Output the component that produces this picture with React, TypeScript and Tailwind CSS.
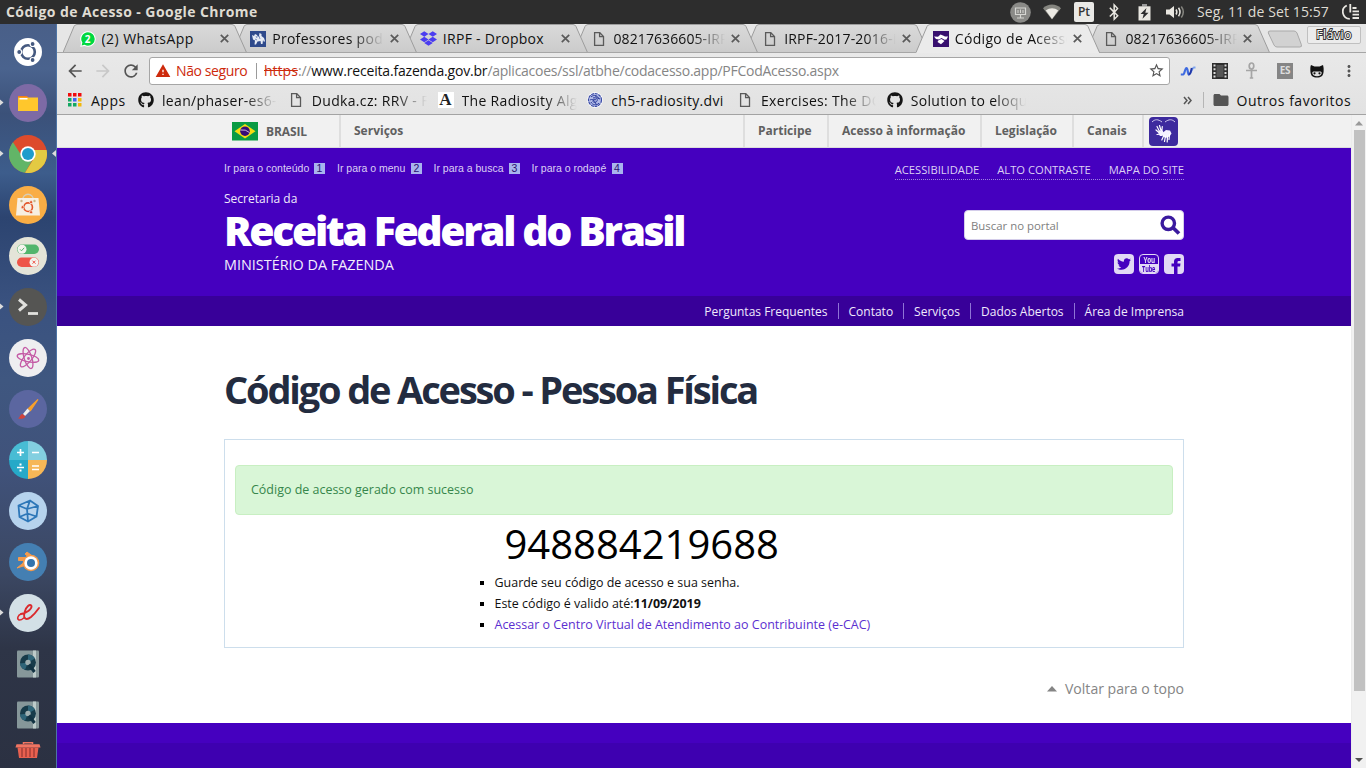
import React from "react";
import { FaGithub, FaDropbox, FaTwitter, FaFacebookF, FaBluetoothB } from "react-icons/fa";
import { MdArrowBack, MdArrowForward, MdRefresh, MdWarning, MdStarBorder, MdMoreVert, MdFolder } from "react-icons/md";

const FileIcon = () => (
  <svg width="16" height="16" viewBox="0 0 16 16" fill="none" stroke="#5a5a5a" strokeWidth="1.3">
    <path d="M3.6 1.7h5.2l3.7 3.8v8.8H3.6z" />
    <path d="M8.6 1.9v3.8h3.7" />
  </svg>
);

const WhatsIcon = () => (
  <span className="relative flex size-4 items-center justify-center">
    <svg className="absolute inset-0" width="16" height="16" viewBox="0 0 16 16">
      <path d="M8 .2a7.700 7.700 0 0 1 0 15.500 8 8 0 0 1-3.500-.8L.3 15.800l1-4A7.700 7.700 0 0 1 8 .2z" fill="#fff" />
      <path d="M8 1.2a6.7 6.7 0 0 1 0 13.5 7 7 0 0 1-3.4-.9l-3 .8.8-3A6.7 6.7 0 0 1 8 1.2z" fill="#00d83f" />
    </svg>
    <span className="relative text-[10px] leading-none font-bold text-white">2</span>
  </span>
);

const UniversityIcon = () => (
  <svg width="16" height="16" viewBox="0 0 16 16">
    <rect width="16" height="16" fill="#2f4a8c" />
    <path d="M2 4l2 1 1-2 2 1 1 2 1-1 .5-3 2 1v2l2.500 2 1 3-1 1-1-2-.5 4H11l-.5-3-3 .5L6 13.500H4.500l.5-4L3 8.500z" fill="#e6ebf5" />
    <path d="M5 8l2 1M9 5l1 3M6 5l1 2" stroke="#5f76b0" strokeWidth=".8" />
  </svg>
);

const ReceitaIcon = () => (
  <svg width="16" height="16" viewBox="0 0 16 16">
    <rect width="16" height="16" fill="#38106f" />
    <path d="M1 5.500l4 .3L7.500 3.500l2.500 1L12 5.500l3 0-1.500 3-2 .3L8.500 7 6 8.500 3 8z" fill="#fff" />
    <path d="M5.500 9.300L8.500 8l3 2-3.500 3.300L4.500 11z" fill="#fff" />
  </svg>
);

type Tab = { label: string; icon: React.ReactNode; active?: boolean; fade?: boolean };
const tabs: Tab[] = [
  { label: "(2) WhatsApp", icon: <WhatsIcon /> },
  { label: "Professores pode", icon: <UniversityIcon />, fade: true },
  { label: "IRPF - Dropbox", icon: <FaDropbox size={17} color="#4b3cf0" /> },
  { label: "08217636605-IRPF", icon: <FileIcon />, fade: true },
  { label: "IRPF-2017-2016-im", icon: <FileIcon />, fade: true },
  { label: "Código de Acesso", icon: <ReceitaIcon />, active: true, fade: true },
  { label: "08217636605-IRPF", icon: <FileIcon />, fade: true },
];
const layers = ["z-[7]", "z-[6]", "z-[5]", "z-[4]", "z-[3]", "z-[8]", "z-[1]"];
const spacing = [
  "tracking-[0.45px]",
  "tracking-[0.3px]",
  "tracking-[0.28px]",
  "tracking-[0.1px]",
  "tracking-[0.2px]",
  "tracking-[0.33px]",
  "tracking-[0.1px]",
];

function ChromeTab({ tab, layer, track }: { tab: Tab; layer: string; track: string }) {
  return (
    <div className={`relative -mr-[12.850px] h-[29px] w-[183.500px] shrink-0 ${layer}`}>
      <svg className="absolute inset-0" width="184" height="29" viewBox="0 0 184 29">
        <defs>
          <linearGradient id="tabFill" x1="0" y1="0" x2="0" y2="1">
            <stop offset="0" stopColor="#dadada" />
            <stop offset="1" stopColor="#cbcbcb" />
          </linearGradient>
        </defs>
        <path
          d="M0 28.500L11 2.500Q12 .5 14 .5H169Q171 .5 172 2.500L183.500 28.500"
          fill={tab.active ? "#ebebeb" : "url(#tabFill)"}
          stroke="#9c9c9c"
        />
        {tab.active ? <path d="M.5 28.500H183" stroke="#ebebeb" /> : <path d="M0 28.500H184" stroke="#a6a6a6" />}
      </svg>
      <div className="relative flex h-[29px] items-center pl-4">
        <span className="flex w-[18px] justify-center">{tab.icon}</span>
        <span
          className={`ml-[5px] w-[112px] overflow-hidden text-[14px] leading-5 whitespace-nowrap text-[#111] ${track} ${
            tab.fade ? "[mask-image:linear-gradient(to_right,black_72%,transparent_100%)]" : ""
          }`}
        >
          {tab.label}
        </span>
        <svg className="ml-[6px]" width="9" height="9" viewBox="0 0 9 9" stroke="#5a5a5a" strokeWidth="1.700">
          <path d="M.8.8l7.400 7.400M8.200.8L.8 8.200" />
        </svg>
      </div>
    </div>
  );
}

const AppsIcon = () => (
  <svg width="14" height="14" viewBox="0 0 14 14">
    <path d="M0 0h3.500v3.500H0zM5 0h3.500v3.500H5zM10 0h3.500v3.500H10z" fill="#f00c0c" />
    <path d="M0 5h3.500v3.500H0zM0 10h3.500v3.500H0zM5 10h3.500v3.500H5z" fill="#12a862" />
    <path d="M5 5h3.500v3.500H5z" fill="#3f63f0" />
    <path d="M10 5h3.500v3.500H10zM10 10h3.500v3.500H10z" fill="#f2b70a" />
  </svg>
);

const LetterIcon = () => (
  <span className="flex size-4 items-center justify-center bg-white font-['Liberation_Serif',serif] text-[17px] leading-4 font-bold text-[#222]">A</span>
);

const KnotIcon = () => (
  <svg width="16" height="16" viewBox="0 0 16 16" fill="none">
    <circle cx="8" cy="8" r="7.800" fill="#fff" />
    <circle cx="8" cy="8" r="6.500" stroke="#3b4ba5" strokeWidth="1.200" strokeDasharray="3 .7" fill="#b3bce8" />
    <path d="M4 5c3-3 7-1 8 2M4 10c1 3 6 4 8 1M6 6c3-1 5 1 4 3s-4 2-4 0 2-2 3-1M3 8c2-1 4-1 6 4M9 3c-1 2 1 3 4 4" stroke="#2a3a9a" />
  </svg>
);

const bookmarks = [
  { label: "lean/phaser-es6-w", icon: <FaGithub size={16} color="#151515" />, fade: true },
  { label: "Dudka.cz: RRV - Fo", icon: <FileIcon />, fade: true },
  { label: "The Radiosity Algo", icon: <LetterIcon />, fade: true },
  { label: "ch5-radiosity.dvi", icon: <KnotIcon />, fade: false },
  { label: "Exercises: The DOM", icon: <FileIcon />, fade: true },
  { label: "Solution to eloque", icon: <FaGithub size={16} color="#151515" />, fade: true },
];

function SystemBar() {
  return (
    <div className="flex h-6 shrink-0 items-center bg-[#2d2d2d] pr-[6px] pl-[6px] text-[#dfdbd2]">
      <span className="flex-1 text-[14px] leading-6 font-bold tracking-[0.43px]">Código de Acesso - Google Chrome</span>
      <svg width="21" height="21" viewBox="0 0 21 21">
        <circle cx="10.500" cy="10.500" r="10.300" fill="#8a8a87" />
        <path d="M5.500 6h10v6.500h-10zM10.500 12.500v3M7 16h7" fill="none" stroke="#d6d6d2" strokeWidth="1.200" />
        <path d="M8 8v3M10.500 7.500v3.500M13 8v3" stroke="#d6d6d2" />
      </svg>
      <svg className="ml-[12px]" width="18" height="16" viewBox="0 0 18 16">
        <path d="M0 4.200C5-.6 13-.6 18 4.200L9 15.500z" fill="#85857f" />
        <path d="M2.800 6.600c4-3 8.500-3 12.400 0L9 15z" fill="#eceae4" />
      </svg>
      <span className="ml-[13px] flex h-5 w-5 items-center justify-center rounded-[2px] bg-[#e9e9e6] text-[12px] font-semibold text-[#333]">Pt</span>
      <FaBluetoothB className="ml-[11px]" size={18} color="#e9e7e1" />
      <svg className="ml-[15px]" width="13" height="17" viewBox="0 0 13 17">
        <path d="M4 0h5v2.500H4z" fill="#999" />
        <path d="M.5 2.300h12V16.500H.5z" fill="#e9e7e1" />
        <path d="M8.500 4L2.500 10h3.200L4.500 14.800l6-6H7.300z" fill="#2d2d2d" />
      </svg>
      <svg className="ml-[15px]" width="20" height="16" viewBox="0 0 20 16" fill="none" strokeWidth="1.500">
        <path d="M0 5.500h3.500L8 2v12l-4.500-3.500H0z" fill="#e9e7e1" />
        <path d="M10 5.500q1.700 2.500 0 5M12.500 3.700q3 4.300 0 8.600" stroke="#e9e7e1" />
        <path d="M15.300 2.500q4 5.500 0 11" stroke="#85857f" />
      </svg>
      <span className="ml-[11px] w-[133px] text-[14px] leading-6 tracking-[0.1px] whitespace-nowrap">Seg, 11 de Set 15:57</span>
      <svg className="ml-[12px]" width="18" height="16" viewBox="0 0 18 16" fill="none" stroke="#e9e7e1" strokeWidth="1.800">
        <path d="M4.800 1.500a7 7 0 0 0 3 13.300M8.300 0v8.500" />
        <path d="M10.500 4h4M10.500 7.300h6.500M10.500 10.600h6.500M10.500 14h6.500" />
      </svg>
    </div>
  );
}

function Browser() {
  return (
    <div className="h-[91px] shrink-0 border-b border-[#a3a3a3] bg-gradient-to-b from-[#ececec] to-[#e2e2e2]">
      <div className="relative flex h-[29px] bg-[#e6e6e6] pl-[5.500px] shadow-[inset_0_-1px_0_#a6a6a6]">
        {tabs.map((t, i) => (
          <ChromeTab key={i} tab={t} layer={layers[i]} track={spacing[i]} />
        ))}
        <svg className="mt-[6px] ml-[10px]" width="36" height="19" viewBox="0 0 36 19">
          <path d="M3 1h24q2 0 3 2l4.300 11.500q1 2.500-1.500 2.500H10q-2 0-3-2L1.300 3Q.8 1 3 1z" fill="#d2d2d2" stroke="#aaa" />
        </svg>
        <div className="mt-[2px] ml-[4px] flex h-[18px] w-[54px] items-center justify-center rounded-[2px] border border-[#c0c0c0] bg-[#ececec] text-[12px] leading-4 tracking-[0.6px] text-white [-webkit-text-stroke:2px_#333] [paint-order:stroke_fill]">
          Flávio
        </div>
      </div>
      <div className="flex h-[35px] items-center pl-[8px]">
        <MdArrowBack size={20} color="#555" />
        <MdArrowForward className="ml-[8px]" size={20} color="#c8c8c8" />
        <MdRefresh className="ml-[8px]" size={20} color="#555" />
        <div className="ml-[8px] flex h-[28px] w-[1021px] items-center rounded-[3px] border border-[#a6a6a6] bg-white pl-[5px] text-[14px] whitespace-nowrap">
          <MdWarning size={16} color="#cd2a0c" />
          <span className="ml-[5px] w-[74px] tracking-[-0.4px] text-[#cd2a0c]">Não seguro</span>
          <span className="mr-[7px] ml-[6px] h-4 w-px bg-[#9b9b9b]" />
          <span className="w-[34px] text-[#cd2a0c] line-through">https</span>
          <span className="tracking-[-0.25px] text-[#888]">://</span>
          <span className="tracking-[-0.18px] text-[#111]">www.receita.fazenda.gov.br</span>
          <span className="flex-1 tracking-[-0.26px] text-[#858585]">/aplicacoes/ssl/atbhe/codacesso.app/PFCodAcesso.aspx</span>
          <MdStarBorder className="mr-[4px]" size={17} color="#555" />
        </div>
        <svg className="ml-[10px]" width="16" height="12" viewBox="0 0 16 12" fill="none">
          <path d="M.8 9.500h2.500C4.500 9.500 5 3 6.500 3S7.500 9.500 9 9.500" stroke="#3f6be0" strokeWidth="2.200" />
          <path d="M9 9.500c2 0 3-7 5-7h1.500" stroke="#7fa5ee" strokeWidth="1.800" />
          <path d="M8.500 9.500c2.300 0 2.500-4 3.300-6.500" stroke="#2238a8" strokeWidth="2" />
        </svg>
        <svg className="ml-[15px]" width="18" height="16" viewBox="0 0 18 16">
          <rect x="1" width="16" height="16" fill="#2e2e2e" />
          <path d="M5.500 2h7v12h-7z" fill="#555" />
          <path d="M2.500 1.500h2v2h-2zm0 3.700h2v2h-2zm0 3.700h2v2h-2zm0 3.600h2v2h-2zM13.500 1.500h2v2h-2zm0 3.700h2v2h-2zm0 3.700h2v2h-2zm0 3.600h2v2h-2z" fill="#ddd" />
        </svg>
        <svg className="ml-[16px]" width="13" height="17" viewBox="0 0 13 17" fill="none" stroke="#a5a5a5" strokeWidth="1.700">
          <ellipse cx="6.500" cy="4" rx="2.300" ry="3" />
          <path d="M1 8.500h11M6.500 7v9M4.800 16h3.400" />
        </svg>
        <span className="ml-[19px] flex size-4 items-center justify-center bg-[#858585] text-[10px] font-bold tracking-[-0.3px] text-[#ddd]">ES</span>
        <svg className="ml-[17px]" width="14" height="14" viewBox="0 0 14 14">
          <path d="M1 1l3.500 1.600h5L13 1c.8 3 .7 4 .6 6.500C13.300 12 11 13.500 7 13.500S.7 12 .4 7.500C.3 4 .2 3 1 1z" fill="#111" />
          <path d="M3.500 7.500h7c2 0 1.800 4.700-3.500 4.700S1.500 7.500 3.500 7.500z" fill="#ddd" />
          <circle cx="4.500" cy="9.300" r="1.100" fill="#111" />
          <circle cx="9.500" cy="9.300" r="1.100" fill="#111" />
        </svg>
        <MdMoreVert className="ml-[16px]" size={18} color="#555" />
      </div>
      <div className="flex h-[24px] items-center pl-[11px] text-[14px] text-[#111]">
        <AppsIcon />
        <span className="ml-[9px] w-[47px] tracking-[0.5px]">Apps</span>
        {bookmarks.map((b, i) => (
          <div key={i} className="flex w-[149.750px] shrink-0 items-center">
            <span className="w-4">{b.icon}</span>
            <span
              className={`ml-2 w-[115px] overflow-hidden tracking-[0.33px] whitespace-nowrap ${
                b.fade ? "[mask-image:linear-gradient(to_right,black_72%,transparent_100%)]" : ""
              }`}
            >
              {b.label}
            </span>
          </div>
        ))}
        <svg className="ml-[146px]" width="10" height="9" viewBox="0 0 10 9" fill="none" stroke="#555" strokeWidth="1.500">
          <path d="M1 1l3 3.500L1 8M5 1l3 3.500L5 8" />
        </svg>
        <span className="ml-[10px] h-4 w-px bg-[#b5b5b5]" />
        <MdFolder className="ml-[8px]" size={18} color="#555" />
        <span className="ml-[7px] tracking-[0.53px] whitespace-nowrap">Outros favoritos</span>
      </div>
    </div>
  );
}

const UbuntuRing = ({ color, bg }: { color: string; bg: string }) => (
  <g fill="none">
    <circle cx="19" cy="19" r="6.800" stroke={color} strokeWidth="2.600" />
    <g fill={color} stroke={bg} strokeWidth="1.200">
      <circle cx="10.200" cy="19" r="2.500" />
      <circle cx="23.600" cy="11" r="2.500" />
      <circle cx="23.600" cy="27" r="2.500" />
    </g>
  </g>
);

const Disk = () => (
  <svg width="38" height="38" viewBox="0 0 38 38">
    <rect x="8" y="5.500" width="22" height="27" rx="1" fill="#86979a" />
    <rect x="24" y="5.500" width="3" height="27" fill="#bccac9" />
    <circle cx="19" cy="17.500" r="8" fill="#173b4a" />
    <path d="M19 9.500a8 8 0 0 1 7 4l-7 4z" fill="#2e6478" />
    <path d="M19 17.500l-8 1a8 8 0 0 0 5 6.300z" fill="#2e6478" />
    <circle cx="19" cy="17.500" r="2.700" fill="#9fb0b2" />
    <path d="M20 19.500l5.500 7.500" stroke="#123242" strokeWidth="3" />
  </svg>
);

const launcher: { icon: React.ReactNode; running?: boolean; focused?: boolean }[] = [
  {
    icon: (
      <svg width="38" height="38" viewBox="0 0 38 38">
        <circle cx="19" cy="19" r="14" fill="#fff" />
        <UbuntuRing color="#45597f" bg="#fff" />
      </svg>
    ),
  },
  {
    running: true,
    icon: (
      <svg width="38" height="38" viewBox="0 0 38 38">
        <circle cx="19" cy="19" r="19" fill="#7d6aa5" />
        <path d="M9 12h9l1.500 2H9z" fill="#f57f17" />
        <path d="M9 13.500h20V27H9z" fill="#ffc72c" />
        <path d="M10.500 14h8v1.500h-8z" fill="#fff" />
      </svg>
    ),
  },
  {
    running: true,
    focused: true,
    icon: (
      <svg width="38" height="38" viewBox="0 0 38 38">
        <circle cx="19" cy="19" r="19" fill="#dd4b2c" />
        <path d="M4 7.200A19 19 0 0 0 16 37.800L24.500 23l-11-1z" fill="#62b567" />
        <path d="M37.600 15H19.500l6 7.500L16 37.800A19 19 0 0 0 37.600 15z" fill="#e3ca43" />
        <circle cx="19" cy="19" r="7.700" fill="#fff" />
        <circle cx="19" cy="19" r="6" fill="#1f9ccc" />
      </svg>
    ),
  },
  {
    icon: (
      <svg width="38" height="38" viewBox="0 0 38 38">
        <circle cx="19" cy="19" r="19" fill="#f9ad45" />
        <path d="M13.500 15c0-9 11-9 11 0" fill="none" stroke="#d9cdb5" strokeWidth="1.500" />
        <path d="M8.500 12h21l1.500 17.500H7z" fill="#f7efe2" />
        <circle cx="12.500" cy="15" r="1.200" fill="#cbb487" />
        <circle cx="25.500" cy="15" r="1.200" fill="#cbb487" />
        <g transform="translate(7.200 9.200) scale(.63)">
          <UbuntuRing color="#e2572b" bg="#f7efe2" />
        </g>
      </svg>
    ),
  },
  {
    icon: (
      <svg width="38" height="38" viewBox="0 0 38 38">
        <circle cx="19" cy="19" r="19" fill="#e4e4d8" />
        <rect x="8" y="7.500" width="22" height="9.500" rx="4.700" fill="#52b56c" />
        <rect x="8" y="20.500" width="22" height="9.500" rx="4.700" fill="#ee5548" />
        <circle cx="13" cy="12.200" r="4.500" fill="#f4f4ee" />
        <circle cx="25" cy="25.200" r="4.500" fill="#f4f4ee" />
        <path d="M11 12.300l1.500 1.500 2.700-3" fill="none" stroke="#52b56c" />
        <path d="M23.500 23.700l3 3m0-3l-3 3" stroke="#ee5548" />
      </svg>
    ),
  },
  {
    running: true,
    icon: (
      <svg width="38" height="38" viewBox="0 0 38 38">
        <circle cx="19" cy="19" r="19" fill="#555553" />
        <path d="M10 11.500l6.500 5.500-6.500 5.500" fill="none" stroke="#e1e1de" strokeWidth="3" />
        <path d="M19 25.500h10" stroke="#e1e1de" strokeWidth="2.800" />
      </svg>
    ),
  },
  {
    icon: (
      <svg width="38" height="38" viewBox="0 0 38 38">
        <circle cx="19" cy="19" r="19" fill="#eeeef0" />
        <g fill="none" stroke="#c45aa5" strokeWidth="1.300">
          <ellipse cx="19" cy="19" rx="11" ry="3.800" transform="rotate(12 19 19)" />
          <ellipse cx="19" cy="19" rx="11" ry="3.800" transform="rotate(72 19 19)" />
          <ellipse cx="19" cy="19" rx="11" ry="3.800" transform="rotate(130 19 19)" />
        </g>
        <circle cx="19.500" cy="19.500" r="1.400" fill="#c45aa5" />
      </svg>
    ),
  },
  {
    icon: (
      <svg width="38" height="38" viewBox="0 0 38 38">
        <circle cx="19" cy="19" r="19" fill="#5b66a0" />
        <path d="M29 9.500l-9.500 9 2 2z" fill="#f6a02c" stroke="#f6a02c" strokeWidth="1.200" />
        <path d="M18.500 18.500l2.500 2.500-5 5-2-2z" fill="#eee" />
        <path d="M13.500 24l3 2.500c-1 2.500-4.500 2.500-7.500 2 2-1 2-4.500 4.500-4.500z" fill="#d3433b" />
      </svg>
    ),
  },
  {
    icon: (
      <svg width="38" height="38" viewBox="0 0 38 38">
        <path d="M19 0v19H0A19 19 0 0 1 19 0z" fill="#48bcd4" />
        <path d="M19 0v19h19A19 19 0 0 0 19 0z" fill="#83cfe0" />
        <path d="M19 38V19H0a19 19 0 0 0 19 19z" fill="#26a9c8" />
        <path d="M19 38V19h19a19 19 0 0 1-19 19z" fill="#f6b757" />
        <path d="M8 11.500h7M11.500 8v7M23 11.500h7M8 26.500h7M23 25h7M23 28.500h7" stroke="#fff" strokeWidth="1.700" />
        <path d="M10.500 22.500h2v2h-2zM10.500 28.500h2v2h-2z" fill="#fff" />
      </svg>
    ),
  },
  {
    icon: (
      <svg width="38" height="38" viewBox="0 0 38 38">
        <circle cx="19" cy="19" r="19" fill="#b6d3ed" />
        <path d="M9.500 13.500L21 8.500l8 5.500-1.500 10.500-8.500 5L10.500 25zM9.500 13.500L18 17l11-3M18 17l1 12.500M21 8.500L18 17M10.500 25l8-3.500 9 3" fill="none" stroke="#2d77b8" strokeWidth="1.800" strokeLinejoin="round" />
      </svg>
    ),
  },
  {
    icon: (
      <svg width="38" height="38" viewBox="0 0 38 38">
        <circle cx="19" cy="19" r="19" fill="#447fb2" />
        <path d="M8 25l9.500-7.500H9.500v-3H20L16 11l2-2 12 9z" fill="#f49a4b" stroke="#f49a4b" strokeLinejoin="round" />
        <circle cx="22" cy="20" r="8.300" fill="#f49a4b" />
        <circle cx="22" cy="20" r="6.700" fill="#fff" />
        <circle cx="22" cy="20" r="4" fill="#3474ad" />
      </svg>
    ),
  },
  {
    running: true,
    icon: (
      <svg width="38" height="38" viewBox="0 0 38 38">
        <circle cx="19" cy="19" r="19" fill="#d3e0e6" />
        <path d="M12 20c6-1 11-5 10.500-8-1-3-6 1-7 6.500-1.500 7 2 8 6.500 4.500 3-2.500 5.500-5.500 8-9" fill="none" stroke="#da2a2d" strokeWidth="1.900" strokeLinecap="round" />
        <path d="M12 20c-3 1-4.500 5-2 6 2.500.5 4-1.500 6-3" fill="none" stroke="#da2a2d" strokeWidth="1.500" />
      </svg>
    ),
  },
  { icon: <Disk /> },
  { icon: <Disk /> },
];

function Launcher() {
  return (
    <aside className="flex w-[57px] shrink-0 flex-col overflow-hidden border-r border-[#4d74a5] bg-[linear-gradient(to_bottom,#495f88_0%,#4a638e_6%,#3b5179_12%,#3d5d8c_20%,#2c4470_26%,#3a5280_38%,#3f5780_48%,#40527a_60%,#3b4762_74%,#2e3547_84%,#2b3142_100%)] pt-[2px]">
      {launcher.map((l, i) => (
        <div key={i} className="relative flex h-[51px] shrink-0 items-center justify-center">
          {l.running && (
            <svg className="absolute top-[21px] left-0" width="5" height="9" viewBox="0 0 5 9">
              <path d="M0 1.500l3.500 3L0 7.500z" fill="#dcdcdc" />
            </svg>
          )}
          {l.icon}
          {l.focused && (
            <svg className="absolute top-[21px] right-0" width="5" height="9" viewBox="0 0 5 9">
              <path d="M5 1L1 4.500 5 8z" fill="#dcdcdc" />
            </svg>
          )}
        </div>
      ))}
      <svg className="mx-auto mt-[2px] shrink-0" width="26" height="16" viewBox="0 0 26 16">
        <path d="M8.500 2V.8h9V2" fill="none" stroke="#f07462" strokeWidth="1.500" />
        <path d="M1.500 2.300h23l1 3.200H.5z" fill="#f07462" />
        <path d="M2.500 5.500h21L22 16H4z" fill="#e8604f" />
        <path d="M7 6v9M11 6v9M15 6v9M19 6v9" stroke="#a43e38" strokeWidth="1.500" />
      </svg>
    </aside>
  );
}

const skipLinks = [
  { label: "Ir para o conteúdo", n: 1, w: "w-[113px]", t: "w-[90px]" },
  { label: "Ir para o menu", n: 2, w: "w-[96.500px]", t: "w-[74px]" },
  { label: "Ir para a busca", n: 3, w: "w-[98px]", t: "w-[75.500px]" },
  { label: "Ir para o rodapé", n: 4, w: "w-[92px]", t: "w-[80px]" },
];

function GovBar() {
  return (
    <div className="flex h-[33px] shrink-0 border-b border-[#dcdcdc] bg-[#f1f1f1] pr-[167px] pl-[175px] text-[12px] leading-[32px] font-bold text-[#606060]">
      <svg className="mt-[7px]" width="26" height="19" viewBox="0 0 26 19">
        <rect width="26" height="18.500" fill="#0a9b43" />
        <path d="M2.500 9.200L13 2l10.500 7.200L13 16.500z" fill="#f5dc10" />
        <circle cx="13" cy="9.200" r="4.800" fill="#370b77" />
        <path d="M8.500 8q5-1 9 2.500" stroke="#cbb9e0" strokeWidth="1" fill="none" />
      </svg>
      <span className="ml-[8px] w-[73px] pt-px tracking-[-0.1px]">BRASIL</span>
      <span className="border-l-2 border-[#dedede] pl-[13px]">Serviços</span>
      <div className="ml-auto flex whitespace-nowrap">
        <span className="w-[84px] border-l-2 border-[#dedede] pl-[13px]">Participe</span>
        <span className="w-[153px] border-l-2 border-[#dedede] pl-[13px]">Acesso à informação</span>
        <span className="w-[92px] border-l-2 border-[#dedede] pl-[13px]">Legislação</span>
        <span className="w-[70px] border-l-2 border-[#dedede] pl-[13px]">Canais</span>
        <span className="w-[42px] border-l-2 border-[#dedede] pt-[2px] pl-[5px]">
          <svg width="29" height="29" viewBox="0 0 29 29">
            <rect width="29" height="29" rx="4" fill="#3d2a9e" />
            <path d="M3 5c3-3 6-3 10 0M26 5c-3-3-6-3-10 0" fill="none" stroke="#cfc8ee" strokeWidth="1" />
            <path d="M8 9.500l2.500 5M10.500 8.500l1.500 5M13.300 9.500l-.5 5M7 13l3.500 3M8 17.500l4-.5" stroke="#fff" strokeWidth="1.200" strokeLinecap="round" />
            <path d="M10 13.500h3.500l1.500 2.500-1.500 3h-2.500L9.500 17z" fill="#f4f1ff" />
            <path d="M14 15.500l3-2.500 4 .5 1.500 3-2 3-4 1.500-2.500-2z" fill="#f4f1ff" />
            <path d="M20.500 17.500l-.5 5M18.500 19l-.3 6M16.500 19l-1 5.500M14.800 18.500l-2 4.500" stroke="#fff" strokeWidth="1.200" strokeLinecap="round" />
          </svg>
        </span>
      </div>
    </div>
  );
}

function Header() {
  return (
    <header className="h-[148px] shrink-0 bg-[#4500bf]">
      <div className="flex justify-between pr-[167px] pl-[167px] text-white">
        <div>
          <div className="mt-[13px] flex h-[14px] items-center font-['Liberation_Sans',sans-serif] text-[10.500px] leading-[13px] whitespace-nowrap text-[#dcd0f4]">
            {skipLinks.map((s) => (
              <span key={s.n} className={`flex items-center ${s.w}`}>
                <span className={s.t}>{s.label}</span>
                <span className="flex h-[11px] w-[11px] items-center justify-center bg-[#a8b4ee] text-[#2b0f6e]">{s.n}</span>
              </span>
            ))}
          </div>
          <div className="mt-[16px] text-[12px] leading-[16px] text-[#f0eafc]">Secretaria da</div>
          <h1 className="mt-px text-[41px] leading-[44px] font-extrabold tracking-[-2.400px] whitespace-nowrap">Receita Federal do Brasil</h1>
          <div className="mt-[3px] text-[14.400px] leading-[20px] text-[#f3eefd]">MINISTÉRIO DA FAZENDA</div>
        </div>
        <div className="flex flex-col items-end">
          <div className="mt-[14px] flex gap-[18px] border-b border-dotted border-[#9d82e0] pb-[1px] text-[11.200px] leading-[16px] whitespace-nowrap text-[#dcd0f4]">
            <span>ACESSIBILIDADE</span>
            <span>ALTO CONTRASTE</span>
            <span>MAPA DO SITE</span>
          </div>
          <div className="mt-[30px] flex h-[30px] w-[220px] items-center justify-between rounded-[4px] border border-[#d4cdea] bg-white pr-[2px] pl-[6px] text-[11.400px] text-[#808080]">
            <span className="pt-px">Buscar no portal</span>
            <svg width="21" height="20" viewBox="0 0 21 20" fill="none" stroke="#3a1a9e">
              <circle cx="8.300" cy="8.300" r="6.200" strokeWidth="3.400" />
              <path d="M12.800 12.500l6.200 6" strokeWidth="3.800" />
            </svg>
          </div>
          <div className="mt-[14px] flex gap-[5px]">
            <span className="flex size-5 items-center justify-center rounded-[4px] bg-[#e2d9f5]">
              <FaTwitter size={14} color="#4500bf" />
            </span>
            <span className="flex size-5 flex-col overflow-hidden rounded-[4px] border border-[#e2d9f5] text-center font-['Open_Sans',sans-serif] text-[9px] leading-[9px] font-bold">
              <span className="flex h-[9px] items-center justify-center text-[#e2d9f5]">
                <span className="scale-x-[0.7] tracking-tight">You</span>
              </span>
              <span className="flex h-[9px] items-center justify-center bg-[#e2d9f5] text-[#4500bf]">
                <span className="scale-x-[0.62] tracking-tight">Tube</span>
              </span>
            </span>
            <span className="flex size-5 items-end justify-end overflow-hidden rounded-[4px] bg-[#e2d9f5] pr-[2px]">
              <svg width="12" height="17" viewBox="0 0 12 17">
                <path d="M4 17V9.500H1.500v-3H4V4.500Q4 1 7.700 1H10.500v3H8.700Q7.500 4 7.500 5.200v1.300h3l-.4 3H7.500V17z" fill="#4500bf" />
              </svg>
            </span>
          </div>
        </div>
      </div>
    </header>
  );
}

const navLinks = ["Contato", "Serviços", "Dados Abertos", "Área de Imprensa"];

export default function App() {
  return (
    <div className="flex h-[768px] w-[1366px] flex-col overflow-hidden bg-white font-['Open_Sans',sans-serif]">
      <SystemBar />
      <div className="flex min-h-0 flex-1">
        <Launcher />
        <div className="flex min-w-0 flex-1 flex-col">
          <Browser />
          <div className="flex min-h-0 flex-1">
            <main className="flex w-[1294px] flex-col overflow-hidden">
              <GovBar />
              <Header />
              <nav className="flex h-[30px] shrink-0 items-center justify-end bg-[#380099] pr-[167px] text-[12px] leading-4 text-[#f0eafc]">
                <span className="pt-px">Perguntas Frequentes</span>
                {navLinks.map((l) => (
                  <span key={l} className="ml-[10px] flex h-4 items-center border-l border-[#8f74d6] pt-px pl-[10px]">
                    {l}
                  </span>
                ))}
              </nav>
              <section className="h-[397px] shrink-0 px-[167px]">
                <h2 className="mt-[37px] text-[38px] leading-[52px] font-bold tracking-[-2.150px] text-[#232c40]">Código de Acesso - Pessoa Física</h2>
                <div className="mt-[24px] h-[209px] border border-[#cddeec] px-[10px] pt-[25px]">
                  <div className="h-[50px] rounded-[4px] border border-[#c8efc2] bg-[#d9f6d7] px-[15px] text-[12.480px] leading-[47px] text-[#36864b]">
                    Código de acesso gerado com sucesso
                  </div>
                  <div className="mt-[4px] pl-[269.500px] text-[40px] leading-[50px] text-black">948884219688</div>
                  <ul className="mt-[3px] list-none pl-[245px] text-[12.480px] leading-[21px] text-[#111]">
                    <li className="flex items-center">
                      <span className="mr-[10.500px] size-1 bg-black" />
                      Guarde seu código de acesso e sua senha.
                    </li>
                    <li className="flex items-center">
                      <span className="mr-[10.500px] size-1 bg-black" />
                      Este código é valido até:<b>11/09/2019</b>
                    </li>
                    <li className="flex items-center">
                      <span className="mr-[10.500px] size-1 bg-black" />
                      <a className="text-[#5b2fd0]">Acessar o Centro Virtual de Atendimento ao Contribuinte (e-CAC)</a>
                    </li>
                  </ul>
                </div>
                <div className="mt-[30px] flex items-center justify-end text-[14.080px] leading-[21px] text-[#858585]">
                  <svg className="mr-[8px]" width="10" height="6" viewBox="0 0 10 6">
                    <path d="M5 0l5 5.500H0z" fill="#858585" />
                  </svg>
                  Voltar para o topo
                </div>
              </section>
              <footer className="flex-1 border-t-[20px] border-[#4500bf] bg-[#3e00b0]" />
            </main>
            <div className="flex w-[15px] flex-col items-center border-l border-[#ececec] bg-[#f1f1f1]">
              <svg className="mt-[6px]" width="8" height="5" viewBox="0 0 8 5">
                <path d="M4 0l4 4.500H0z" fill="#999" />
              </svg>
              <div className="mt-[4px] h-[561px] w-[11px] bg-[#c1c1c1]" />
              <svg className="mt-auto mb-[6px]" width="8" height="4" viewBox="0 0 8 4">
                <path d="M0 0h8L4 4z" fill="#4f4f4f" />
              </svg>
            </div>
          </div>
        </div>
      </div>
    </div>
  );
}
